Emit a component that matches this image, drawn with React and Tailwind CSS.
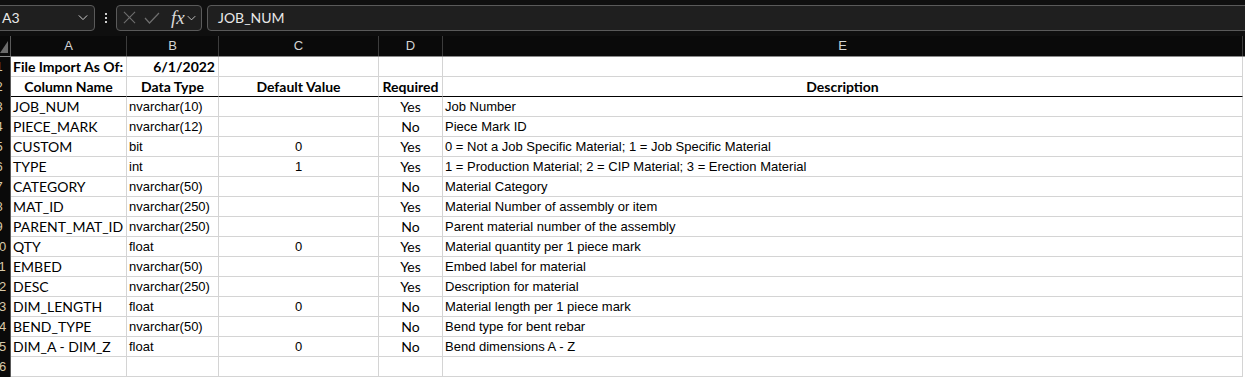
import React from "react";

const rows = [
  ["JOB_NUM", "nvarchar(10)", "", "Yes", "Job Number"],
  ["PIECE_MARK", "nvarchar(12)", "", "No", "Piece Mark ID"],
  ["CUSTOM", "bit", "0", "Yes", "0 = Not a Job Specific Material; 1 = Job Specific Material"],
  ["TYPE", "int", "1", "Yes", "1 = Production Material; 2 = CIP Material; 3 = Erection Material"],
  ["CATEGORY", "nvarchar(50)", "", "No", "Material Category"],
  ["MAT_ID", "nvarchar(250)", "", "Yes", "Material Number of assembly or item"],
  ["PARENT_MAT_ID", "nvarchar(250)", "", "No", "Parent material number of the assembly"],
  ["QTY", "float", "0", "Yes", "Material quantity per 1 piece mark"],
  ["EMBED", "nvarchar(50)", "", "Yes", "Embed label for material"],
  ["DESC", "nvarchar(250)", "", "Yes", "Description for material"],
  ["DIM_LENGTH", "float", "0", "No", "Material length per 1 piece mark"],
  ["BEND_TYPE", "nvarchar(50)", "", "No", "Bend type for bent rebar"],
  ["DIM_A - DIM_Z", "float", "0", "No", "Bend dimensions A - Z"],
  ["", "", "", "", ""],
];

const calibri = "font-['Lato','Open_Sans',sans-serif]";
const arial = "font-['Liberation_Sans',Arial,sans-serif]";

function Chevron({ className }) {
  return (
    <svg viewBox="0 0 12 8" className={className} fill="none" stroke="currentColor" strokeWidth="1.2">
      <path d="M1 1.5 6 6.5 11 1.5" />
    </svg>
  );
}

// row header column is scrolled, only a sliver of the numbers shows
function RowNum({ n }) {
  return (
    <div className={`h-5 w-[11px] overflow-hidden bg-[#0a0a0a] border-r border-[#5a5a5a] flex items-center text-[13px] text-[#d8c8a8] ${arial}`}>
      <span className="shrink-0 w-[24px] -ml-[13px] text-center whitespace-nowrap">{n}</span>
    </div>
  );
}

function Cell({ children, className = "", thick }) {
  return (
    <div
      className={`h-5 flex items-center whitespace-nowrap border-r border-[#d4d4d4] border-b ${thick ? "border-b-black" : "border-b-[#d4d4d4]"} text-black ${className}`}
    >
      {children}
    </div>
  );
}

export default function App() {
  return (
    <div className="w-[1245px] h-[377px] overflow-hidden bg-white select-none">
      {/* FORMULA BAR */}
      <div className="h-9 bg-[#0f0f0f] flex items-center pt-[1px] pb-[2px]">
        <div className="h-[26px] w-[99px] -ml-1 pl-[5px] pr-[6px] rounded-[4px] border border-[#5a5a5a] bg-[#1f1f1f] flex items-center justify-between">
          <span className={`text-[14px] text-[#e8e8e8] ${calibri}`}>A3</span>
          <Chevron className="w-[10px] h-[7px] text-[#cfcfcf]" />
        </div>
        <div className="w-[21px] flex flex-col items-center gap-[2px]">
          <span className="w-[2px] h-[2px] bg-[#cfcfcf]" />
          <span className="w-[2px] h-[2px] bg-[#cfcfcf]" />
          <span className="w-[2px] h-[2px] bg-[#cfcfcf]" />
        </div>
        <div className="h-[26px] w-[86px] rounded-[4px] border border-[#5a5a5a] bg-[#1f1f1f] flex items-center pl-[6px] gap-[8px]">
          <svg viewBox="0 0 14 14" className="w-[13px] h-[13px] text-[#6e6e6e]" fill="none" stroke="currentColor" strokeWidth="1.2">
            <path d="M1 1 13 13M13 1 1 13" />
          </svg>
          <svg viewBox="0 0 16 12" className="w-[16px] h-[12px] text-[#6e6e6e]" fill="none" stroke="currentColor" strokeWidth="1.2">
            <path d="M1 6 5.5 11 15 1" />
          </svg>
          <div className="flex items-center gap-[2px] ml-[3px]">
            <span className="font-['Liberation_Serif',serif] italic text-[19px] leading-none text-[#d8d8d8]">fx</span>
            <Chevron className="w-[9px] h-[6px] text-[#cfcfcf]" />
          </div>
        </div>
        <div className="h-[26px] flex-1 ml-[5px] -mr-2 rounded-[4px] border border-[#5a5a5a] bg-[#1f1f1f] flex items-center pl-[10px]">
          <span className={`text-[14px] text-[#e8e8e8] ${calibri}`}>JOB_NUM</span>
        </div>
      </div>

      {/* COLUMN HEADERS */}
      <div className={`h-[21px] flex bg-[#0a0a0a] border-b border-[#8a8a8a] text-[13px] text-[#d4d4d4] ${arial}`}>
        <div className="w-[11px] border-r border-[#5a5a5a] flex items-end justify-end pb-[3px] pr-[2px]">
          <svg viewBox="0 0 8 12" className="w-[8px] h-[12px]">
            <path d="M8 0 8 12 0 12Z" fill="#6b6b6b" />
          </svg>
        </div>
        <div className="w-[116px] border-r border-[#3c3c3c] flex items-center justify-center">A</div>
        <div className="w-[92px] border-r border-[#3c3c3c] flex items-center justify-center">B</div>
        <div className="w-[160px] border-r border-[#3c3c3c] flex items-center justify-center">C</div>
        <div className="w-[64px] border-r border-[#3c3c3c] flex items-center justify-center">D</div>
        <div className="w-[800px] border-r border-[#3c3c3c] flex items-center justify-center">E</div>
      </div>

      {/* GRID */}
      <div className="grid grid-cols-[11px_116px_92px_160px_64px_800px]">
        <RowNum n="1" />
        <Cell className={`pl-[2px] font-bold text-[14px] ${calibri}`}>File Import As Of:</Cell>
        <Cell className={`justify-end pr-[3px] font-bold text-[14px] ${calibri}`}>6/1/2022</Cell>
        <Cell />
        <Cell />
        <Cell />

        <RowNum n="2" />
        <Cell thick className={`justify-center font-bold text-[14px] ${calibri}`}>Column Name</Cell>
        <Cell thick className={`justify-center font-bold text-[14px] ${calibri}`}>Data Type</Cell>
        <Cell thick className={`justify-center font-bold text-[14px] ${calibri}`}>Default Value</Cell>
        <Cell thick className={`justify-center font-bold text-[14px] ${calibri}`}>Required</Cell>
        <Cell thick className={`justify-center font-bold text-[14px] ${calibri}`}>Description</Cell>

        {rows.map((r, i) => (
          <React.Fragment key={i}>
            <RowNum n={String(i + 3)} />
            <Cell className={`pl-[2px] text-[14px] ${calibri}`}>{r[0]}</Cell>
            <Cell className={`pl-[2px] text-[13px] ${arial}`}>{r[1]}</Cell>
            <Cell className={`justify-center text-[13px] ${arial}`}>{r[2]}</Cell>
            <Cell className={`justify-center text-[14px] ${calibri}`}>{r[3]}</Cell>
            <Cell className={`pl-[2px] text-[13px] ${arial}`}>{r[4]}</Cell>
          </React.Fragment>
        ))}
      </div>
    </div>
  );
}
